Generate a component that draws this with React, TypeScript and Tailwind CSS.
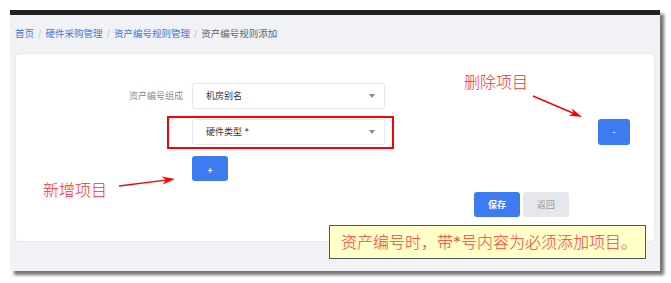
import React from 'react'

const FONT = "font-['Inter','Noto_Sans_CJK_SC',sans-serif]"

function Caret(){
    return (
        <svg width="6" height="4" viewBox="0 0 6 4" className="ml-auto mr-[9px]">
            <polygon points="0,0 6,0 3,4" fill="#8a8a8a" />
        </svg>
    )
}

function Select({value}:{value:string}){
    return (
        <div className="flex items-center w-[193px] h-[26px] bg-white border border-[#e6e8ec] rounded-[3px] pl-[13px] text-[9px] text-[#333]">
            <span>{value}</span>
            <Caret />
        </div>
    )
}

export default function App(){
    return (
        <div className={`relative w-[671px] h-[283px] bg-white overflow-hidden ${FONT}`}>
            {/* window */}
            <div className="absolute left-[10px] top-[10px] w-[650px] h-[261px] bg-[#f1f2f6] border-t-[5px] border-[#222] shadow-[4px_4px_3px_rgba(0,0,0,0.55)]">
                <div className="flex items-center h-[38px] pl-[5px] text-[9.5px] gap-x-[4px]">
                    <span className="text-[#3f76d9]">首页</span>
                    <span className="text-[#c5c8cf]">/</span>
                    <span className="text-[#3f76d9]">硬件采购管理</span>
                    <span className="text-[#c5c8cf]">/</span>
                    <span className="text-[#3f76d9]">资产编号规则管理</span>
                    <span className="text-[#c5c8cf]">/</span>
                    <span className="text-[#666]">资产编号规则添加</span>
                </div>
                <div className="mx-[5px] h-[189px] bg-white border border-[#e7e9ee] rounded-[4px] pt-[29px]">
                    <div className="flex items-center h-[26px]">
                        <div className="w-[167px] text-right text-[9px] text-[#8c8c8c]">资产编号组成</div>
                        <div className="ml-[9px]"><Select value="机房别名" /></div>
                    </div>
                    <div className="flex items-center h-[26px] mt-[10px]">
                        <div className="relative ml-[176px]">
                            <Select value="硬件类型 *" />
                            <div className="absolute -left-[25px] -right-[9px] -top-[3px] -bottom-[4px] border-2 border-[#ff0000]" />
                        </div>
                        <button className="ml-auto mr-[24px] w-[32px] h-[26px] bg-[#3c7cf0] rounded-[3px] text-white text-[8px] leading-none">-</button>
                    </div>
                    <div className="flex mt-[11px]">
                        <button className="ml-[176px] w-[36px] h-[25px] bg-[#3c7cf0] rounded-[3px] text-white text-[10px] leading-none">+</button>
                    </div>
                    <div className="flex mt-[11px] gap-x-[3px]">
                        <button className="ml-[458px] w-[46px] h-[25px] bg-[#3c7cf0] rounded-[3px] text-white text-[9px] font-bold">保存</button>
                        <button className="w-[46px] h-[25px] bg-[#e4e7ec] rounded-[3px] text-[#9a9a9a] text-[9px]">返回</button>
                    </div>
                </div>
            </div>

            {/* annotations */}
            <div className="absolute left-[464px] top-[72px] text-[16px] leading-[20px] text-[#ff2b2b] font-light">删除项目</div>
            <div className="absolute left-[43px] top-[180px] text-[16px] leading-[20px] text-[#ff2b2b] font-light">新增项目</div>
            <svg className="absolute left-0 top-0 pointer-events-none" width="671" height="283" viewBox="0 0 671 283">
                <line x1="533" y1="96" x2="574" y2="113.5" stroke="#ff0000" strokeWidth="1.4" />
                <polygon points="582,117 568.5,115.6 573.7,113.5 571.6,108.2" fill="#ff0000" />
                <line x1="119" y1="186" x2="166" y2="180.1" stroke="#ff0000" strokeWidth="1.4" />
                <polygon points="175,179 162.6,184.6 166.1,180.1 161.6,176.6" fill="#ff0000" />
            </svg>
            <div className="absolute left-[329px] top-[225px] w-[317px] h-[34px] flex items-center pl-[11px] bg-[#ffffc8] border border-[#555] text-[16px] text-[#ff3b3b] font-light">
                资产编号时，带*号内容为必须添加项目。
            </div>
        </div>
    )
}
